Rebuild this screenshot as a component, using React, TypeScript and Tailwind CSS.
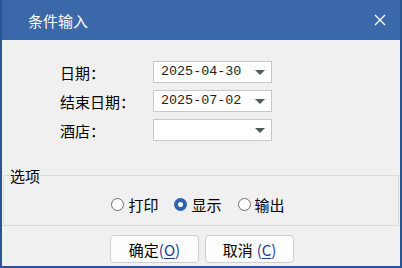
import type { FC } from "react";

const font = { fontFamily: '"Noto Sans CJK SC", "Noto Sans", sans-serif' };
const mono = { fontFamily: '"Liberation Mono", "DejaVu Sans Mono", monospace' };

const Field: FC<{ label: string; value?: string }> = ({ label, value }) => (
	<div className="flex h-[22px] items-center">
		<span className="w-[93px] text-[15px] leading-none text-black">{label}</span>
		<div className="flex h-[22px] w-[119px] items-center justify-between border border-[#c8c8c8] bg-white pl-[7px] pr-[6px]">
			<span style={mono} className="text-[13.4px] leading-none text-[#222]">{value}</span>
			<span className="h-0 w-0 border-x-[5px] border-t-[5px] border-x-transparent border-t-[#505a5a]" />
		</div>
	</div>
);

const Radio: FC<{ label: string; checked?: boolean }> = ({ label, checked }) => (
	<label className="flex items-center gap-[4px]">
		{checked ? (
			<span className="flex h-[13px] w-[13px] items-center justify-center rounded-full bg-[#2d62b3]">
				<span className="h-[5px] w-[5px] rounded-full bg-white" />
			</span>
		) : (
			<span className="h-[13px] w-[13px] rounded-full border border-[#6e6e6e] bg-white" />
		)}
		<span className="text-[15px] leading-none text-black">{label}</span>
	</label>
);

const Button: FC<{ label: string; hot: string; spaced?: boolean }> = ({ label, hot, spaced }) => (
	<button className="flex h-[28px] w-[89px] items-center justify-center rounded-[4px] border border-[#cfcfcf] bg-[#fdfdfd] text-[15px] leading-none text-black">
		{label}
		<span className={spaced ? "ml-[4px] text-[#1a3f8f]" : "text-[#1a3f8f]"}>
			(<span className="underline underline-offset-2">{hot}</span>)
		</span>
	</button>
);

export default function App() {
	return (
		<div style={font} className="flex h-[268px] w-[402px] flex-col border-x-[2px] border-b-[2px] border-[#2a5595] bg-[#f0f0f0]">
			<div className="flex h-[40px] items-center justify-between bg-[#3a68a9] pl-[26px] pr-[14px] text-white">
				<span className="text-[15px] leading-none">条件输入</span>
				<svg width="12" height="12" viewBox="0 0 12 12" className="stroke-white" strokeWidth="1.4">
					<path d="M1 1 L11 11 M11 1 L1 11" />
				</svg>
			</div>
			<div className="flex flex-col gap-[7px] pl-[58px] pt-[21px]">
				<Field label="日期：" value="2025-04-30" />
				<Field label="结束日期：" value="2025-07-02" />
				<Field label="酒店：" />
			</div>
			<fieldset className="mx-[1px] mt-[27px] h-[58px] border border-[#dcdcdc] px-[6px]">
				<legend className="text-[15px] leading-none text-black">选项</legend>
				<div className="flex justify-center gap-[16px] pt-[14px] pr-[6px]">
					<Radio label="打印" />
					<Radio label="显示" checked />
					<Radio label="输出" />
				</div>
			</fieldset>
			<div className="flex justify-center gap-[6px] pt-[9px] pl-[2px]">
				<Button label="确定" hot="O" />
				<Button label="取消" hot="C" spaced />
			</div>
		</div>
	);
}
